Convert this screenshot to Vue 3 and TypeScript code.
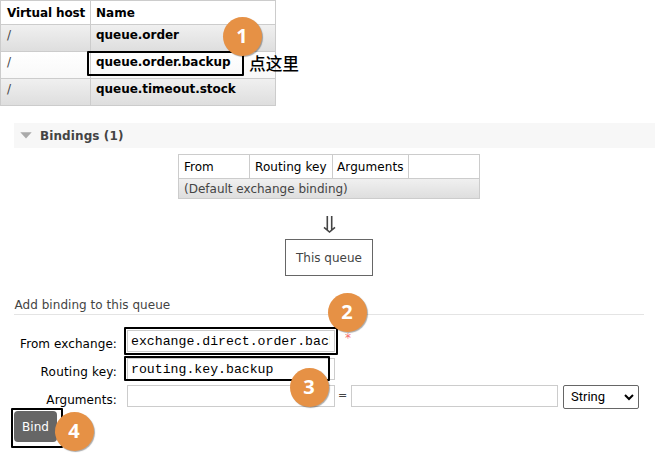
<script setup lang="ts">
import { ref } from 'vue'

interface Callout { id: number; x: number; y: number }
interface Frame { id: string; x: number; y: number; w: number; h: number }

const queues = ['queue.order', 'queue.order.backup', 'queue.timeout.stock']
const exchange = ref('exchange.direct.order.backup')
const routingKey = ref('routing.key.backup')
const argName = ref('')
const argValue = ref('')

const frames: Frame[] = [
  { id: 'queue', x: 87, y: 51, w: 157, h: 25 },
  { id: 'exchange', x: 124, y: 327, w: 214, h: 28 },
  { id: 'routing', x: 124, y: 356, w: 206, h: 25 },
  { id: 'bind', x: 11, y: 408, w: 52, h: 40 },
]
const callouts: Callout[] = [
  { id: 1, x: 222.5, y: 17 },
  { id: 2, x: 327.5, y: 293 },
  { id: 3, x: 289.5, y: 368 },
  { id: 4, x: 54.5, y: 412 },
]
</script>

<template>
  <main class="page">
    <div class="queues">
      <div class="row head"><div class="cell host"><b>Virtual host</b></div><div class="cell"><b>Name</b></div></div>
      <div v-for="(q, i) in queues" :key="q" class="row" :class="{ alt: i % 2 === 0, plain: i % 2 === 1 }">
        <div class="cell host">/</div>
        <div class="cell name"><b>{{ q }}</b></div>
      </div>
    </div>

    <h2 class="section">
      <svg width="12" height="7" viewBox="0 0 12 7"><path d="M0.3 0.3H11.7L6 6.5Z" fill="#aaa" /></svg>
      <span>Bindings (1)</span>
    </h2>

    <div class="bindings">
      <div class="bhead"><span>From</span><span class="key">Routing key</span><span class="arg">Arguments</span><span></span></div>
      <div class="bbody"><span>(Default exchange binding)</span></div>
    </div>
    <div class="arrow">
      <svg width="14" height="18" viewBox="0 0 14 18" fill="none" stroke="#444" stroke-width="1.6"><path d="M4.3 -1V14M8.7 -1V14M1 11.3L6.5 16L12 11.3" /></svg>
    </div>
    <div class="this-queue"><span>This queue</span></div>

    <h3 class="add"><span>Add binding to this queue</span></h3>

    <form class="form" @submit.prevent>
      <div class="line">
        <label class="from">From exchange:</label>
        <input v-model="exchange" class="field">
        <span class="star">*</span>
      </div>
      <div class="line">
        <label class="route">Routing key:</label>
        <input v-model="routingKey" class="field">
      </div>
      <div class="line args">
        <label>Arguments:</label>
        <input v-model="argName" class="field">
        <span class="eq">=</span>
        <input v-model="argValue" class="field value">
        <div class="select">
          <span>String</span>
          <svg width="10" height="7" viewBox="0 0 10 7" fill="none" stroke="#000" stroke-width="2"><path d="M1 1L5 5L9 1" /></svg>
        </div>
      </div>
      <button class="bind">Bind</button>
    </form>

    <div v-for="f in frames" :key="f.id" class="frame" :style="{ left: f.x + 'px', top: f.y + 'px', width: f.w + 'px', height: f.h + 'px' }"></div>
    <div class="note">点这里</div>
    <div v-for="c in callouts" :key="c.id" class="callout" :style="{ left: c.x + 'px', top: c.y + 'px' }">{{ c.id }}</div>
  </main>
</template>

<style>
body { background: #fff; }
</style>

<style scoped>
* { box-sizing: border-box; }
.page { position: relative; width: 662px; height: 461px; overflow: hidden; font: 12px/16px Verdana, "DejaVu Sans", sans-serif; color: #444; }
.queues { width: 276px; height: 106px; border: 1px solid #ccc; }
.row { display: grid; grid-template-columns: 90px 1fr; height: 27px; border-bottom: 1px solid #ccc; }
.row:last-child { border-bottom: 0; height: 26px; }
.row.head { height: 24px; }
.row.head .cell { padding-top: 4px; }
.cell { padding: 2px 5px 0; color: #000; white-space: nowrap; }
.cell.host { padding-left: 6px; border-right: 1px solid #ccc; color: #444; }
.name { letter-spacing: -0.03px; }
.head .cell.host { color: #000; letter-spacing: -0.1px; }
.alt { background: linear-gradient(#f0f0f0, #dedede); }
.plain { background: linear-gradient(#fff, #f8f8f8); }
.section { display: flex; align-items: center; gap: 8px; width: 641px; height: 25px; margin: 17px 0 0 14px; padding-left: 6px; background: #f7f7f7; font-size: 12px; line-height: 16px; font-weight: bold; letter-spacing: 0.1px; }
.bindings { width: 302px; height: 45px; margin: 6px 0 0 178px; border: 1px solid #ccc; white-space: nowrap; }
.bhead { display: grid; grid-template-columns: 71px 83px 76px 1fr; height: 24px; border-bottom: 1px solid #ccc; color: #000; }
.bhead span { padding: 4px 0 0 5px; border-right: 1px solid #ccc; }
.bhead span.key { letter-spacing: 0.08px; }
.bhead span.arg { padding-left: 4px; letter-spacing: 0.1px; }
.bhead span:last-child { border-right: 0; }
.bbody { height: 19px; padding: 2px 5px 0; background: linear-gradient(#f0f0f0, #dedede); }
.arrow { display: flex; height: 40px; margin-left: 323px; padding-top: 17px; }
.this-queue { display: flex; align-items: center; justify-content: center; width: 88px; height: 37px; margin-left: 285px; border: 1px solid #666; white-space: nowrap; }
.add { width: 630px; height: 19px; margin: 20px 0 0 14px; padding: 1px 0 0 0.5px; border-bottom: 1px solid #e4e4e4; font-size: 12px; line-height: 16px; font-weight: normal; letter-spacing: 0.04px; }
.form { margin-top: 15px; }
.line { display: flex; height: 28px; }
.line.args { height: 27px; margin-top: -1px; }
label { width: 117px; margin-right: 10px; padding-top: 6px; color: #000; text-align: right; white-space: nowrap; }
label.from { letter-spacing: 0.08px; }
label.route { letter-spacing: 0.2px; }
.args label { padding-top: 7px; letter-spacing: 0.08px; }
.field { width: 208px; height: 22px; margin: 0; padding: 0 4px 0 3px; border: 1px solid #ccc; border-radius: 0; background: #fff; color: #000; font: 13.2px/18px "Liberation Mono", monospace; outline: none; }
.star { margin: 0 0 0 10px; color: #f56c6c; }
.eq { width: 16px; padding: 3px 0 0 3px; font-size: 11px; }
.field.value { width: 207px; }
.select { display: flex; align-items: center; justify-content: space-between; width: 76px; height: 24px; margin-left: 5px; padding: 0 4px 0 7px; border: 1px solid #666; border-radius: 2px; color: #000; font: 13px/18px Roboto, Arial, sans-serif; }
.bind { display: block; width: 43px; height: 31px; margin: -1px 0 0 14px; padding: 0; border: 0; border-radius: 4px; background: #666; color: #fff; font: 12px/16px "DejaVu Sans", sans-serif; }
.frame { position: absolute; border: 2px solid #000; border-radius: 1px; pointer-events: none; }
.note { position: absolute; left: 249px; top: 51px; color: #000; font: 500 16.7px/24px "Noto Sans CJK SC", sans-serif; white-space: nowrap; }
.callout { position: absolute; width: 39px; height: 39px; border-radius: 50%; background: #e69145; box-shadow: 1px 1px 1px #0005; color: #fff; font: bold 20px/38px "Open Sans", sans-serif; text-align: center; }
</style>
